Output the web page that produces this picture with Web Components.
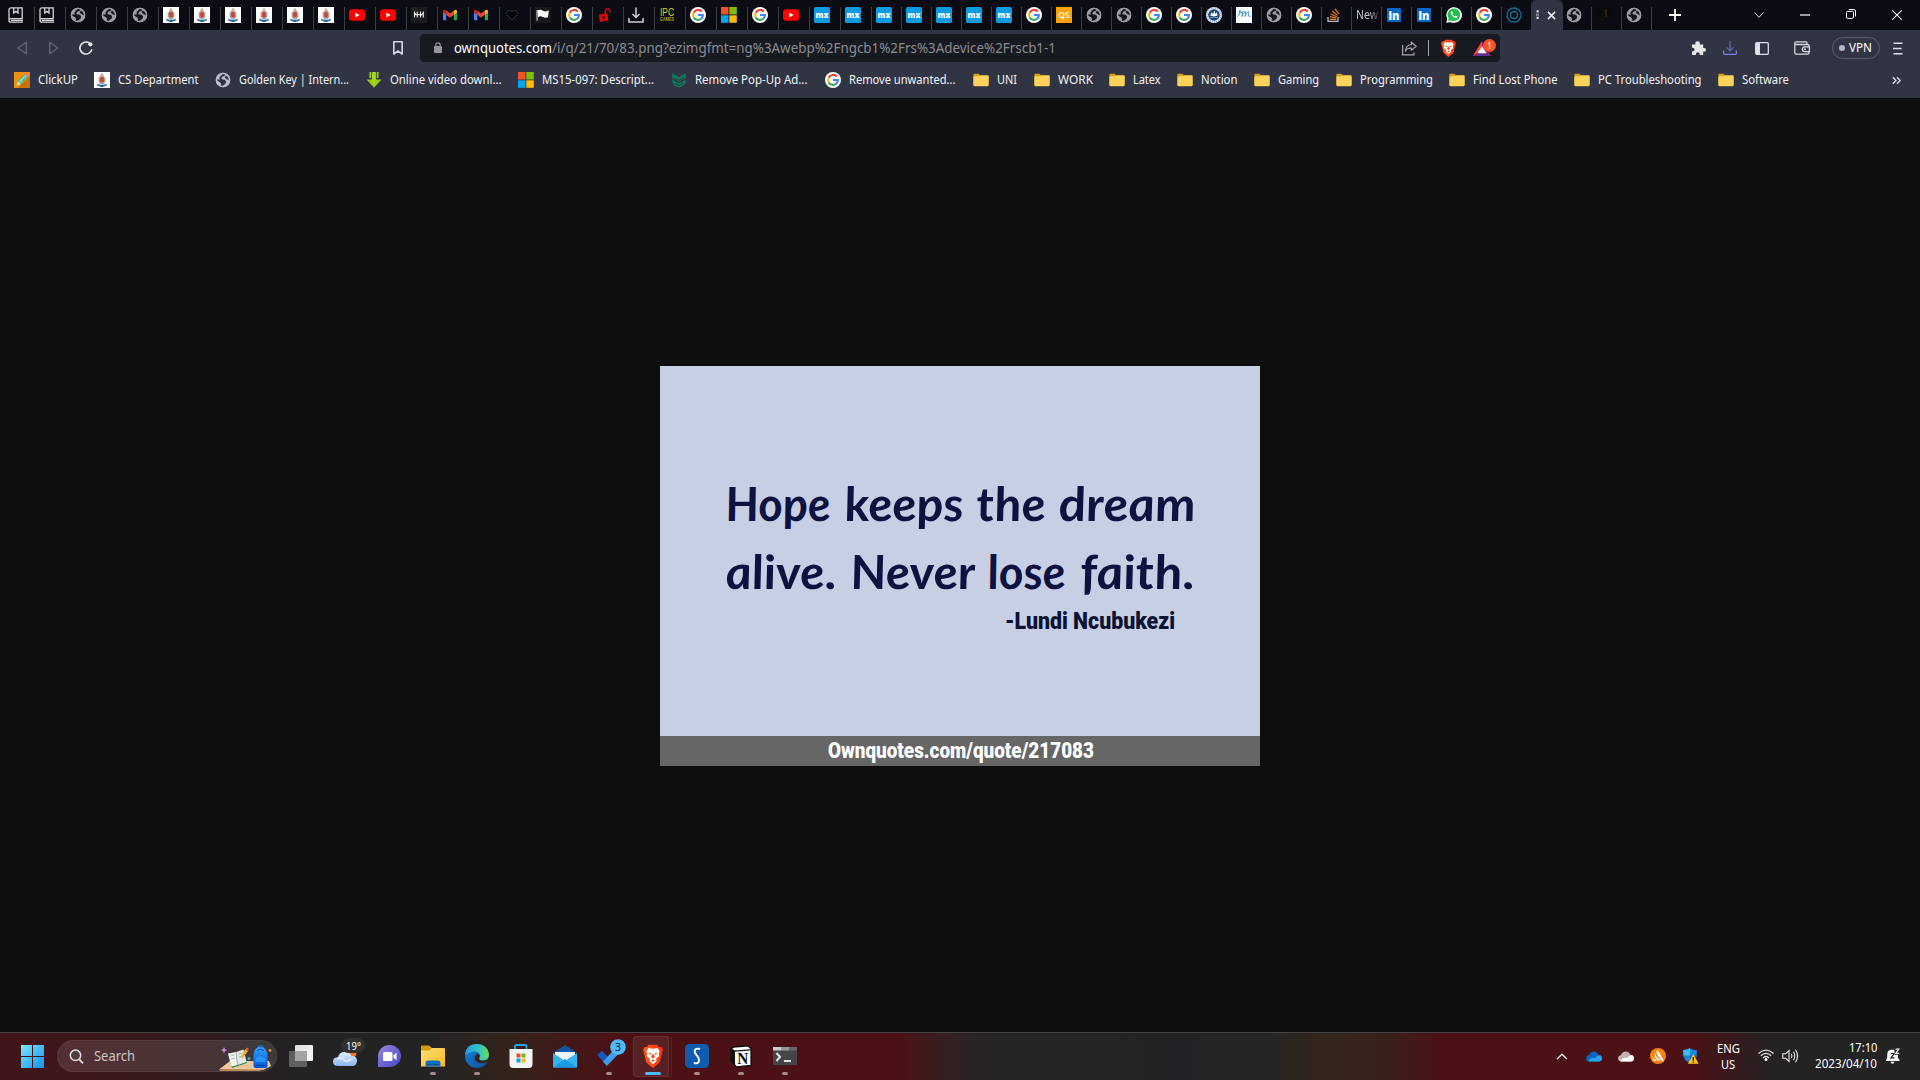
<!DOCTYPE html>
<html lang="en">
<head>
<meta charset="utf-8">
<title>83.png</title>
<style>
html,body{margin:0;padding:0;background:#0e0e0e;overflow:hidden}
body{width:1920px;height:1080px;font-family:"Noto Sans","Open Sans",sans-serif}
</style>
</head>
<body>
<desktop-screen></desktop-screen>
<script>
const ICONS = {
book:['0 0 16 16','<g fill="none" stroke="#d6d6d6" stroke-width="1.3"><path d="M3 .9H14.2V11.6H3Q1 11.6 1 13.4T3 15.2H15M1 13.5V3Q1 .9 3 .9M3 13.4H15M5.7 1V6L7.9 4.4 10 6V1"/></g>'],
globe:['0 0 16 16','<circle cx="8" cy="8" r="7.2" fill="#9a9ea9"/><path d="M8.6 1.3 10.3 2.5 9.6 4 7.5 4.4 6.2 6.2 7.4 7.6 9.8 7.7 11.2 9.5 10.6 11.6 8.2 13.6 6.7 14.3 5.3 14 6.2 12 5 10.2 2.3 8.7 1.9 7.3 4.6 7.7 4.5 5.3 6.3 3.2Z M11 3.4 13.5 5.6 14 8.4 12.3 7.4 10.6 6.6 9.6 5.3Z" fill="#14151d"/><circle cx="8" cy="8" r="6.6" fill="none" stroke="#9a9ea9" stroke-width="1.4"/>'],
globeL:['0 0 16 16','<circle cx="8" cy="8" r="7.2" fill="#bcc0c8"/><path d="M8.6 1.3 10.3 2.5 9.6 4 7.5 4.4 6.2 6.2 7.4 7.6 9.8 7.7 11.2 9.5 10.6 11.6 8.2 13.6 6.7 14.3 5.3 14 6.2 12 5 10.2 2.3 8.7 1.9 7.3 4.6 7.7 4.5 5.3 6.3 3.2Z M11 3.4 13.5 5.6 14 8.4 12.3 7.4 10.6 6.6 9.6 5.3Z" fill="#313443"/><circle cx="8" cy="8" r="6.6" fill="none" stroke="#bcc0c8" stroke-width="1.4"/>'],
crest:['0 0 16 16','<rect width="16" height="16" fill="#fff"/><path d="M8 .8 9.5 3.5H6.5Z" fill="#a9a39a"/><path d="M6 3.4H10V5.2H6Z" fill="#b9a58f"/><rect x="5.2" y="5" width="5.6" height="5.8" rx="1.6" fill="#dc5238"/><path d="M5.2 5V10.5M10.8 5V10.5" stroke="#9fa5b3"/><path d="M8 6V10" stroke="#8f4c44" stroke-width="1.3"/><path d="M3.3 11.5Q5 13 8 12.6 11 13 12.7 11.5V13.6L8 15.2 3.3 13.6Z" fill="#2a6598"/><path d="M5.5 11.4H10.5" stroke="#7fa6bf"/>'],
yt:['0 0 16 16','<rect y="2.2" width="16" height="11.6" rx="3.2" fill="#f00"/><path d="M6.3 5.6V10.4L10.6 8Z" fill="#fff"/>'],
hash:['0 0 16 16','<rect width="16" height="16" fill="#1b1b1e"/><path d="M3.5 4.6V10.6M6.3 4.6V10.6M9.5 4.6V10.6M12.3 4.6V10.6M3.5 5.5 4.8 7.6 6.3 7.6M6.3 7.6H9.5M9.5 8.8 12.3 6" stroke="#eee" stroke-width="1.1" fill="none"/>'],
gmail:['0 0 16 16','<path d="M1 4V12.5Q1 13.2 1.8 13.2H4.2V7.2Z" fill="#4285f4"/><path d="M15 4V12.5Q15 13.2 14.2 13.2H11.8V7.2Z" fill="#34a853"/><path d="M4.2 3.6 8 6.6 11.8 3.6V7.8L8 10.8 4.2 7.8Z" fill="#ea4335"/><path d="M1 4.2Q1.2 2.2 3.2 2.9L4.2 3.7V7.8L1 5.4Z" fill="#c5221f"/><path d="M15 4.2Q14.8 2.2 12.8 2.9L11.8 3.7V7.8L15 5.4Z" fill="#fbbc04"/>'],
heart:['0 0 16 16','<path d="M8 13 2.8 7.4Q1.8 4.6 4 3.7 6.4 2.8 8 5.2 9.6 2.8 12 3.7 14.2 4.6 13.2 7.4Z" fill="#020203" stroke="#444447" stroke-width=".8"/>'],
flag:['0 0 16 16','<rect width="16" height="16" fill="#1a1a1c"/><path d="M2 3V13.6" stroke="#ddd"/><path d="M2.5 3.2Q5.5 2.2 8 3.7T13.8 3.6L13 10.3Q10.5 11.3 8 9.9T3 10.2Z" fill="#fff"/>'],
G:['0 0 16 16','<circle cx="8" cy="8" r="8" fill="#fff"/><g fill="none" stroke-width="2.1"><path d="M11.9 4.7A4.9 4.9 0 0 0 3.7 5.7" stroke="#ea4335"/><path d="M3.7 5.7A4.9 4.9 0 0 0 3.8 10.4" stroke="#fbbc05"/><path d="M3.8 10.4A4.9 4.9 0 0 0 11.2 11.7" stroke="#34a853"/><path d="M8 8H12.9Q12.9 10.3 11.2 11.7" stroke="#4285f4"/></g>'],
unlock:['0 0 16 16','<path d="M2 7.4 10.5 6.2 11.4 13.6 2.8 15Z" fill="#d80b0b"/><path d="M8.3 6.5V4Q8.8 1.6 11 1.9 13.2 2.2 12.8 5.5" fill="none" stroke="#d80b0b" stroke-width="1.5"/><circle cx="6.7" cy="10" r="1.2" fill="#300"/><path d="M6.7 10V12.6" stroke="#300"/>'],
dl:['0 0 16 16','<path d="M8 .5V10M4.5 7 8 10.5 11.5 7M1 11V15H15V11" fill="none" stroke="#d0d0d4" stroke-width="1.5"/>'],
ipc:['0 0 16 16','<text x="1" y="8.9" textLength="14" lengthAdjust="spacingAndGlyphs" font-family="Liberation Sans" font-size="10.5" fill="#d2d51c">IPC</text><text x="1" y="14.4" textLength="14" lengthAdjust="spacingAndGlyphs" font-family="Liberation Sans" font-weight="700" font-size="5" fill="#a5a71c">GAMES</text>'],
ms:['0 0 16 16','<path fill="#f35325" d="M0 0h7.5v7.5H0z"/><path fill="#81bc06" d="M8.3 0h7.5v7.5H8.3z"/><path fill="#05a6f0" d="M0 8.3h7.5v7.5H0z"/><path fill="#ffba08" d="M8.3 8.3h7.5v7.5H8.3z"/>'],
mx:['0 0 16 16','<rect width="16" height="16" rx="1.5" fill="#0c9ae0"/><text x="1.6" y="10.8" textLength="12.8" lengthAdjust="spacingAndGlyphs" font-family="Open Sans" font-weight="800" font-size="9.5" fill="#fff">mx</text>'],
qs:['0 0 16 16','<rect width="16" height="16" fill="#fba305"/><text x="2.2" y="10.8" textLength="11.6" lengthAdjust="spacingAndGlyphs" font-family="Open Sans" font-weight="600" font-size="8" fill="#fff">QS</text>'],
ship:['0 0 16 16','<circle cx="8" cy="8" r="8" fill="#e9f1f7"/><circle cx="8" cy="8" r="7" fill="none" stroke="#3f729b" stroke-width=".8" stroke-dasharray="1 1"/><circle cx="8" cy="8" r="5.8" fill="#174a78"/><path d="M4 8.6Q5 7.6 6 4.8L6.8 7.2 8.8 3.2 9 7 10.6 5.2 11.6 8.6 8 9.4Z" fill="#fff"/><path d="M4 10.8Q8 9.5 12 10.8" fill="none" stroke="#8fb3cd" stroke-width=".7"/>'],
em:['0 0 16 16','<rect width="16" height="16" fill="#fff"/><path d="M1.3 9.7Q4 8 4.3 4.5 4.4 3 3.6 3.5 2.5 5.5 4.6 5.6 6.5 5.4 7 4.2L5.8 9.5Q7.5 4.5 9.5 4.5 10.2 5 8.9 9.4 10.8 4.7 12.6 4.4 13.6 4.7 12.2 8.2 12 10 14.9 9" fill="none" stroke="#3b93c0" stroke-width="1"/>'],
stack:['0 0 16 16','<path d="M2 10V14.4H12V10" fill="none" stroke="#babcbf" stroke-width="1.3"/><path d="M3.7 12.3H10.3M3.8 9.7 10.4 11M4.6 7 10.8 9.8M6.3 4.3 11.6 8.4M9 1.9 12.8 7" stroke="#f48024" stroke-width="1.2"/>'],
inn:['0 0 16 16','<rect x="1" y="1" width="14" height="14" rx="1" fill="#0a66c2"/><text x="2.5" y="12.5" textLength="11" lengthAdjust="spacingAndGlyphs" font-family="Open Sans" font-weight="800" font-size="12" fill="#fff">in</text>'],
wa:['0 0 16 16','<path d="M.3 15.8 1.3 11.8A7.8 7.8 0 1 1 4.4 14.9Z" fill="#fff"/><path d="M2 14.1 2.7 11.4A6.3 6.3 0 1 1 5 13.4Z" fill="#1fc04d"/><path d="M5.1 4.5Q3.9 6.2 6.3 8.9 9 11.5 11 10.7L11.4 9.4 9.6 8.4 8.8 9.4Q7 8.6 6.4 7L7.1 6.2 6.4 4.4Z" fill="#fff"/>'],
ring:['0 0 16 16','<circle cx="8" cy="8" r="7" fill="none" stroke="#0e6f91" stroke-width="1.3"/><circle cx="8" cy="8" r="3.6" fill="none" stroke="#0e7698" stroke-width="1.5"/>'],
mini:['0 0 16 16','<path d="M5.6 3.2V5.6M5.6 9.8V12" stroke="#e8eef8" stroke-width="2"/><path d="M4.9 6.4V9" stroke="#5f9be6" stroke-width="1.6"/><path d="M6.5 6.2V9.4" stroke="#a2714e"/>'],
dark:['0 0 16 16','<rect width="16" height="16" fill="#0b0b0d"/><path d="M3 13V9M5 13V7M7 13V6M12 13V8" stroke="#131311"/><path d="M9.8 2V6Q11 8 9.6 10" fill="none" stroke="#3d3212" stroke-width="1.3"/>'],
x:['0 0 10 10','<path d="M1 1 9 9M9 1 1 9" stroke="#eee" stroke-width="1.7"/>'],
plus:['0 0 12 12','<path d="M6 0V12M0 6H12" stroke="#fff" stroke-width="1.8"/>'],
chev:['0 0 10 6','<path d="M.5 .5 5 5.3 9.5 .5" fill="none" stroke="#ddd" stroke-width="1"/>'],
min:['0 0 10 2','<path d="M0 1H10" stroke="#fff" stroke-width="1.2"/>'],
rest:['0 0 10 10','<rect x=".5" y="2.4" width="7" height="7" rx="1.2" fill="none" stroke="#fff"/><path d="M2.8 .5H7.8Q9.5 .5 9.5 2.2V7.4" fill="none" stroke="#fff"/>'],
close:['0 0 10 10','<path d="M.3 .3 9.7 9.7M9.7 .3 .3 9.7" stroke="#fff" stroke-width="1.1"/>'],
back:['0 0 10 14','<path d="M9.3 1.2V12.8L1 7Z" fill="none" stroke="#646875" stroke-width="1.3" stroke-linejoin="round"/>'],
fwd:['0 0 10 14','<path d="M.7 1.2V12.8L9 7Z" fill="none" stroke="#646875" stroke-width="1.3" stroke-linejoin="round"/>'],
reload:['0 0 14 14','<path d="M10.5 2.2A6 6 0 1 0 12.8 8.4" fill="none" stroke="#e8e8ec" stroke-width="1.6"/><circle cx="11.4" cy="3.3" r="2.1" fill="#e8e8ec"/>'],
mark:['0 0 10 14','<path d="M.8 .8H9.2V13L5 10 .8 13Z" fill="none" stroke="#d5d6dc" stroke-width="1.6" stroke-linejoin="round"/>'],
lock:['0 0 8 11','<rect y="4" width="8" height="7" rx=".8" fill="#96979c"/><path d="M1.8 4.5V3Q1.8 .8 4 .8T6.2 3V4.5" fill="none" stroke="#96979c" stroke-width="1.2"/>'],
share:['0 0 15 15','<path d="M.6 4V13.9H12V11.5" fill="none" stroke="#a8a9ad" stroke-width="1.2"/><path d="M9.3 1.2 14.2 5.3 9.3 9.2V7Q5 6.8 3.4 10.2 3.8 4.2 9.3 3.5Z" fill="none" stroke="#a8a9ad" stroke-width="1.2" stroke-linejoin="round"/>'],
vline:['0 0 1 16','<path d="M.5 0V16" stroke="#a2a3a7"/>'],
brave:['0 0 24 28','<defs><linearGradient id="b" x2="1"><stop stop-color="#ff5a1c"/><stop offset="1" stop-color="#fb3310"/></linearGradient></defs><path d="M7 1H17L19.5 3.5 22 3.4 24 7 23 9.5 20.5 20 19 22.5 12 28 5 22.5 3.5 20 1 9.5 0 7 2 3.4 4.5 3.5Z" fill="url(#b)"/><path d="M12 5.5 17.5 4.8 20 8.5 18.8 11.5 19.5 14 15.4 17.6 16.8 19.5 12 23.5 7.2 19.5 8.6 17.6 4.5 14 5.2 11.5 4 8.5 6.5 4.8Z" fill="#fff"/><path d="M6.2 10 10 11 9.2 12.8ZM17.8 10 14 11 14.8 12.8ZM11 12 9.7 15.2 12 17 14.3 15.2 13 12M12 18 9.5 19 12 20.8 14.5 19Z" fill="#f64a1a"/>'],
bat:['0 0 18 15','<path d="M9 0 0 15H18Z" fill="#9e1f63"/><path d="M9 0 0 15 4.5 12.3 9 5Z" fill="#ff4724"/><path d="M0 15H18L13.5 12.3H4.5Z" fill="#662d91"/><path d="M9 5 4.5 12.3H13.5Z" fill="#fff"/>'],
puz:['0 0 15 14','<path d="M1 3.6H4.4Q3.8 .2 6.6 .2T8.8 3.6H12.2V7Q15 6.4 15 8.8T12.2 10.6V14H8.7Q9 11.2 6.9 11.2T5 14H1V10.4Q3.6 10.6 3.6 8.6T1 6.8Z" fill="#e8e8eb"/>'],
dlb:['0 0 14 14','<path d="M7 0V9.5M3.5 6.3 7 9.8 10.5 6.3" fill="none" stroke="#6668b8" stroke-width="1.2"/><path d="M.6 9.5V12Q.6 13.4 2 13.4H12Q13.4 13.4 13.4 12V9.5" fill="none" stroke="#7c7dee" stroke-width="1.3"/>'],
side:['0 0 14 13','<rect x=".7" y=".7" width="12.6" height="11.6" rx="1" fill="none" stroke="#dfdfe4" stroke-width="1.3"/><path d="M.8 1H5V12H.8Z" fill="#dfdfe4"/>'],
wallet:['0 0 16 14','<path d="M13 3V1.8Q13 .8 12 .8H2.3Q.8.8.8 2.1T2.3 3.5H13.8Q15 3.5 15 4.8V5.6M.8 2V11.8Q.8 13.2 2.2 13.2H13.6Q15 13.2 15 11.8V10.8M15.4 5.8H10.6Q8.4 6 8.4 8.2T10.6 10.6H15.4Z" fill="none" stroke="#d8d8dd" stroke-width="1.3"/><circle cx="11" cy="8.2" r="1" fill="#d8d8dd"/>'],
menu:['0 0 10 13','<path d="M.5 1.2H9.5M0 6.5H8.6M.5 11.8H9.5" stroke="#dddde2" stroke-width="1.5"/>'],
pencil:['0 0 16 16','<rect width="16" height="16" fill="#ef9012"/><path d="M16 3V16H4Z" fill="#c87505"/><path d="M2.5 13.6 3.8 9.6 11.5 2.3 14 4.8 6.4 12.3Z" fill="#42c7ad"/><path d="M5 10.4 12 3.5" stroke="#c8f2df"/><path d="M11.2 2.5 12.5 1.4 14.8 3.8 13.8 5Z" fill="#f076a3"/><path d="M2.5 13.6 3.8 9.6 6.4 12.3Z" fill="#f6e4c0"/>'],
garrow:['0 0 16 16','<path d="M3.4 0H5V6H3.4ZM11 0H12.6V6H11ZM5.7 0H10.3V7.5H15.5L8 15.8 .5 7.5H5.7Z" fill="#94cf13"/><path d="M8 0V14" stroke="#b3e640"/>'],
mal:['0 0 14 14','<path d="M1 1 7 4.3 13 1V5L7 8.5 1 5ZM1 6.5 7 10 13 6.5V9L10.5 12 7 13.5 3.5 12 1 9Z" fill="#0c7a5e"/><path d="M3 5 7 7.2 11 5M3.5 10 7 11.9 10.5 10" fill="none" stroke="#31423f"/>'],
folder:['0 0 16 14','<path d="M.4 1.5Q.4 .7 1.2 .7H5.4L7 2.3H14.6Q15.6 2.3 15.6 3.3V12.2H.4Z" fill="#d9a01b"/><path d="M.4 4Q.4 3.2 1.2 3.2H6L7.3 2.5H14.8Q15.6 2.5 15.6 3.4V12Q15.6 13.2 14.4 13.2H1.6Q.4 13.2 .4 12Z" fill="#fdd35c"/>'],
more:['0 0 9 7','<path d="M.8 .3 4 3.5 .8 6.7M5 .3 8.2 3.5 5 6.7" fill="none" stroke="#e2e2e6" stroke-width="1.3"/>'],
win:['0 0 23 23','<defs><linearGradient id="w" x2="1" y2="1"><stop stop-color="#7ae6fb"/><stop offset="1" stop-color="#1292f4"/></linearGradient></defs><path fill="url(#w)" d="M0 0H11V11H0ZM12 0H23V11H12ZM0 12H11V23H0ZM12 12H23V23H12Z"/>'],
mag:['0 0 15 15','<circle cx="6.5" cy="6.3" r="5.2" fill="#4f3c3f" stroke="#e3dddd" stroke-width="1.5"/><path d="M10.3 10.3 14 14.3" stroke="#e3dddd" stroke-width="1.8"/>'],
art:['0 0 53 27','<defs><linearGradient id="p" x2="0" y2="1"><stop stop-color="#35a0ff"/><stop offset="1" stop-color="#0553d8"/></linearGradient></defs><path d="M0 24.5 11 16H50L52 21 44 25Z" fill="#eec89a"/><path d="M0 24.5 H44 L40 26H1Z" fill="#b98352"/><path d="M9 10 25 5.5 28 18 13 23Z" fill="#288b4a"/><path d="M9 8.5 17 7 18.5 20 12.5 21.5Z" fill="#f6f6f2"/><path d="M17 7 24.5 4.5 27.5 17 18.5 20Z" fill="#e3e7e8"/><path d="M17 7 18.5 20M11.5 11 15.5 10M12 14 16 13M19.5 9 23.5 8M20 12 24.5 11" stroke="#9aa9a6" stroke-width=".8"/><path d="M23 14 22.5 10.5 26.5 4 29 6Z" fill="#f7ac2e"/><path d="M26.5 4 28 2.5 30 4 29 6Z" fill="#e75638"/><path d="M38.5 2.7Q41.5-1.5 44.5 2.7" fill="none" stroke="#1173e6" stroke-width="1.4"/><path d="M34.5 12Q34.5 2 41.5 2T48.5 12V21Q48.5 23 46 23H37Q34.5 23 34.5 21Z" fill="url(#p)"/><path d="M36.5 13Q41.5 10 46.5 13V17H36.5Z" fill="#2694ff"/><path d="M38 5.5Q41.5 3 45 5.5M36.5 20.5H46.5" stroke="#0a3fad" fill="none"/><path d="M5 2 6 4.2 8.3 5 6 6 5 8.4 4 6 1.8 5 4 4.2Z" fill="#d985ee"/><circle cx="30" cy="13.5" r="1.5" fill="#35b7b6"/><circle cx="51" cy="5.5" r="1.4" fill="#e59d0f"/>'],
view:['0 0 24 22','<defs><linearGradient id="v" x2="1" y2="1"><stop stop-color="#ddd"/><stop offset="1" stop-color="#fff"/></linearGradient></defs><rect x="6" width="18" height="16" rx="1" fill="url(#v)"/><rect y="6" width="18" height="16" rx="1" fill="#606060"/><rect x="6" y="6" width="12" height="10" fill="#a4a4a4"/>'],
weather:['0 0 34 30','<circle cx="18.5" cy="15" r="5" fill="#f57819"/><defs><linearGradient id="c" x2="0" y2="1"><stop stop-color="#e0efff"/><stop offset="1" stop-color="#8bb4ef"/></linearGradient></defs><path d="M5 28Q0 28 0 23.5T5 19.5Q6 14 11.5 14T18.5 18Q24 17.5 24 23 23.5 28 19.5 28Z" fill="url(#c)"/><path d="M4 20.5Q8 19 11 22T18 21" fill="none" stroke="#f6fbff" stroke-width="2" opacity=".6"/><rect x="8" y="0" width="24" height="15" rx="7.5" fill="#303030"/><text x="13" y="12" textLength="15" lengthAdjust="spacingAndGlyphs" font-family="Noto Sans" font-size="11" fill="#fff">19°</text>'],
chat:['0 0 23 23','<defs><linearGradient id="h" x2="1" y2="1"><stop stop-color="#9a86dd"/><stop offset="1" stop-color="#4746c8"/></linearGradient></defs><path d="M0 22V11A11.5 11 0 1 1 11.5 22Z" fill="url(#h)"/><rect x="5" y="7" width="9.5" height="9" rx="1.5" fill="#fff"/><path d="M15.5 10.3 18.5 7.8V15.2L15.5 12.8Z" fill="#fff"/>'],
expl:['0 0 24 22','<path d="M0 1.5Q0 .5 1 .5H8L11 3V9H0Z" fill="#d99a07"/><defs><linearGradient id="e" x2="1" y2="1"><stop stop-color="#ffe07a"/><stop offset="1" stop-color="#fcb91f"/></linearGradient></defs><path d="M0 5.5H8.5L11 3H23Q24 3 24 4V21.5H0Z" fill="url(#e)"/><path d="M4.5 18Q4.5 15.5 7 15.5H17Q19.5 15.5 19.5 18V21.5H4.5Z" fill="#0f6fc0"/><path d="M6.5 19.5H17.5" stroke="#0a4c8e"/>'],
edge:['0 0 24 24','<defs><linearGradient id="g1" x2="1"><stop stop-color="#289be0"/><stop offset=".6" stop-color="#33c4c4"/><stop offset="1" stop-color="#6ddc45"/></linearGradient><linearGradient id="g2" x2="1" y2="1"><stop stop-color="#1586d4"/><stop offset="1" stop-color="#0c4e9c"/></linearGradient></defs><circle cx="12" cy="12" r="12" fill="url(#g2)"/><path d="M0 11Q1 0 12 0 22.5 .5 24 10 24 16.5 17.8 16.5 13.5 16.5 14.2 14 16 11.5 13.8 9 9 5 0 11Z" fill="url(#g1)"/><path d="M24.5 12.5Q23.5 16.5 17.8 16.7 13.5 16.5 14.2 14 15 12.6 14.4 11 12.4 9.5 10.4 11.4 8.8 14 11 17 15 20.6 22 18.3L24.5 17Z" fill="#33211a"/><path d="M8.3 12Q6 18 11.5 21.5 16.5 24.5 21.5 19.5 14 22 10.3 17.2 8.7 14.5 10.4 11.4Z" fill="#155fa9"/>'],
store:['0 0 24 24','<path d="M6 5V2.5Q6 1 7.5 1H16Q17.5 1 17.5 2.5V5" fill="none" stroke="#24a6e6" stroke-width="1.8"/><path d="M.5 5H23.5V20Q23.5 24 20 24H4Q.5 24 .5 20Z" fill="#f4f4f5"/><path fill="#f05125" d="M7.5 9.5H11.5V13.5H7.5Z"/><path fill="#7fba12" d="M12.5 9.5H16.5V13.5H12.5Z"/><path fill="#0aa2ec" d="M7.5 14.5H11.5V18.5H7.5Z"/><path fill="#fcb613" d="M12.5 14.5H16.5V18.5H12.5Z"/>'],
mail:['0 0 24 23','<path d="M0 8 12 0 24 8Z" fill="#0d57a5"/><path d="M2 7H22V13L12 18 2 13Z" fill="#eef4fa"/><path d="M0 8 12 16 24 8V22.5H0Z" fill="#35b3ee"/><path d="M0 22.5 12 14 24 22.5Z" fill="#1b9be4"/>'],
todo:['0 0 30 28','<path d="M.3 16 4.8 11.8 10.8 17.8 8.3 25Z" fill="#1c56bd"/><path d="M6 22.5 18.5 9 23 13.3 9.8 27Z" fill="#3f9eee"/><circle cx="21" cy="8" r="7.8" fill="#4ebcfb"/><text x="18" y="12" font-family="Noto Sans" font-size="10.5" fill="#111">3</text>'],
S:['0 0 24 24','<rect width="24" height="24" rx="4.5" fill="#0f5bae"/><path d="M15 5Q10 3.5 9.6 7.5 10 10 12.5 12.3 15 16 13.3 18.5 11.7 20 8.8 19" fill="none" stroke="#fff" stroke-width="1.9"/>'],
notion:['0 0 24 24','<path d="M1 4 4 2 20 .8 23 4V21.5L7 23 1 16.5Z" fill="#fff" stroke="#151010" stroke-width="1.6" stroke-linejoin="round"/><path d="M1 4 5.5 6.5V22L1 16.5Z" fill="#151010"/><path d="M1 4 5.5 6.5 22.5 5" fill="none" stroke="#151010" stroke-width="1.3"/><text x="8" y="19.5" textLength="12" lengthAdjust="spacingAndGlyphs" font-family="Liberation Serif" font-weight="700" font-size="17" fill="#0c0c0c">N</text>'],
term:['0 0 24 18','<path d="M0 1H24V18H0Z" fill="#454545"/><path d="M0 0H8V3.5H0Z" fill="#ccc"/><path d="M8 0H16V3.5H8Z" fill="#999"/><path d="M16 0H24V3.5H16Z" fill="#686868"/><path d="M3.5 6 7 9.8 3.5 14" fill="none" stroke="#e6e6e6" stroke-width="2"/><path d="M11 14H18" stroke="#fff" stroke-width="1.7"/>'],
up:['0 0 12 7','<path d="M1 6 6 1.2 11 6" fill="none" stroke="#f2ecec" stroke-width="1.3"/>'],
od:['0 0 16 11','<path d="M3 10.5Q0 10 0 7 .2 4.5 3 4 4 .5 7.8 .5 11 .5 12.2 3.8 16 4 16 7.3 15.7 10.5 13 10.5Z" fill="#0b62b9"/><path d="M2 10Q5 5.5 9 7 12 3 14.5 4.6 16 5.5 16 7.5 15.7 10.5 13 10.5H3Z" fill="#28a3ea"/>'],
cl:['0 0 16 11','<path d="M3 10.5Q0 10 0 7 .2 4.5 3 4 4 .5 7.8 .5 11 .5 12.2 3.8 16 4 16 7.3 15.7 10.5 13 10.5Z" fill="#c5b1b2"/><path d="M2 10Q5 5.5 9 7 12 3 14.5 4.6 16 5.5 16 7.5 15.7 10.5 13 10.5H3Z" fill="#fff"/>'],
avast:['0 0 16 16','<circle cx="8" cy="8" r="8" fill="#f98410"/><path d="M6.2 3Q8.2 1.9 9.2 4.2L13.6 12.4Q13.2 13.6 12 12.9 7.5 9 6.2 3ZM4.8 5.6Q6.3 9.6 10.3 12.8H8Q4 9.8 4.8 5.6ZM3.4 9Q4.6 11.6 6.8 12.8H4Q2.4 11.2 3.4 9Z" fill="#fff"/>'],
def:['0 0 16 16','<path d="M7 0Q9 2 13.8 2V7Q13.5 12 7 15 .5 12 .3 7V2Q5 2 7 0Z" fill="#1589da"/><path d="M7 0V7.5H.3V2Q5 2 7 0Z" fill="#39bdf3"/><path d="M7 7.5H13.8Q13.3 12 7 15Z" fill="#0c5aaf"/><path d="M10.3 5.8 15.6 15.8H5Z" fill="#fbc516"/><path d="M10.3 9V12.7M10.3 13.6V14.8" stroke="#111" stroke-width="1.3"/>'],
wifi:['0 0 16 12','<g fill="none" stroke="#e5e5e5" stroke-width="1.2"><path d="M.5 4.5Q8-2.3 15.5 4.5M2.8 6.8Q8 2 13.2 6.8M5 9Q8 6 11 9"/></g><circle cx="8" cy="10.4" r="1.5" fill="#fff"/>'],
vol:['0 0 17 14','<g fill="none" stroke="#e8e8e8" stroke-width="1.1"><path d="M.8 4.8H3.6L7 1.5V12.5L3.6 9.2H.8ZM9.3 4.7Q10.8 7 9.3 9.3M11.5 2.8Q14 7 11.5 11.2M13.5 .7Q17.6 7 13.5 13.3"/></g>'],
bell:['0 0 14 16','<path d="M0 11.8 1.2 10V6.5Q1.4 1.8 6 1.6L8.5 2V6.8H12V10L13.5 11.8V13H0ZM4.5 13.7H8.5Q8 15.8 6.5 15.8T4.5 13.7Z" fill="#f4f4f4"/><path d="M5 5.5H8.2L5 9.8H8.4" fill="none" stroke="#222" stroke-width="1.2"/><path d="M9.5 1.2H12.8L9.6 5.3H13.2" fill="none" stroke="#eee" stroke-width="1.2"/>']
};

class UiIcon extends HTMLElement {
  connectedCallback() {
    const [vb, body] = ICONS[this.getAttribute('name')];
    const d = vb.split(' ');
    const w = this.getAttribute('w') || d[2], h = this.getAttribute('h') || d[3];
    this.attachShadow({mode:'open'}).innerHTML =
      `<style>:host{display:block;flex:none;width:${w}px;height:${h}px}svg{display:block;overflow:visible}</style>
       <svg width="${w}" height="${h}" viewBox="${vb}" preserveAspectRatio="none">${body}</svg>`;
  }
}
customElements.define('ui-icon', UiIcon);

/* A single line of text set to an exact advance width, optionally skewed about its baseline. */
class FitText extends HTMLElement {
  connectedCallback() {
    const a = n => this.getAttribute(n);
    const w = a('w'), h = a('h') || 18, b = a('b') || 13, t = this.textContent;
    const skew = a('skew') ? ` transform="translate(0 ${b}) skewX(${a('skew')}) translate(0 -${b})"` : '';
    this.attachShadow({mode:'open'}).innerHTML =
      `<style>:host{display:block;flex:none;width:${w}px;height:${h}px}svg{display:block;overflow:visible}
       text{fill:currentColor;stroke:currentColor;stroke-width:${a('bold') || 0};stroke-linejoin:round}</style>
       <svg width="${w}" height="${h}"><text x="0" y="${b}" font-size="${a('s') || 12}" textLength="${w}" lengthAdjust="spacingAndGlyphs"${skew}></text></svg>`;
    this.shadowRoot.querySelector('text').textContent = t;
  }
}
customElements.define('fit-text', FitText);

/* Horizontal flow: each part is [left, width, markup]; spacing becomes margins. */
const flow = (parts, start = 0) => {
  let end = start;
  return parts.map(([x, w, html, dy = 0]) => {
    const m = x - end; end = x + w;
    return `<span class="cell" style="margin-left:${m}px;width:${w}px;margin-top:${dy}px">${html}</span>`;
  }).join('');
};
const ic = (n, w, h) => `<ui-icon name="${n}"${w ? ` w="${w}" h="${h}"` : ''}></ui-icon>`;
const FLOWCSS = '.cell{display:block;flex:none}';

class TabStrip extends HTMLElement {
  connectedCallback() {
    const names = ('book book globe globe globe crest crest crest crest crest crest yt yt hash gmail gmail heart flag G unlock dl ipc G ms G yt mx mx mx mx mx mx mx G qs globe globe G G ship em globe G stack NEW inn inn wa G ring ACTIVE globe dark globe').split(' ');
    const tabs = names.map((n, i) => {
      const cls = n === 'ACTIVE' ? 'tab active' : 'tab';
      const body = n === 'NEW' ? '<fit-text class="new" w="22" h="16" b="12" s="12">New</fit-text>'
        : n === 'ACTIVE' ? `<span class="crop">${ic('mini')}</span>${ic('x', 9, 9)}` : ic(n);
      return `<div class="${cls}" style="width:${i < 28 ? 31 : 30}px">${body}</div>`;
    }).join('');
    this.attachShadow({mode:'open'}).innerHTML = `<style>
      :host{display:flex;height:30px;background:#0b0b14;padding-left:4px;box-sizing:border-box;overflow:hidden}
      .tab{box-sizing:border-box;flex:none;height:23px;margin-top:7px;padding-left:4px;border-right:1px solid #3c3d42}
      .active{height:30px;margin-top:0;background:#313443;border:0;border-radius:5px 5px 0 0;display:flex;align-items:center;gap:7px;padding-left:0;outline:1px solid #313443}
      .crop{width:8px;overflow:hidden}
      .new{color:#c3c3c8;-webkit-mask:linear-gradient(90deg,#000 60%,#0004 100%)}
      .rest{display:flex;align-items:flex-start}${FLOWCSS}</style>
      ${tabs}<div class="rest">${flow([
        [1669,12,ic('plus'),9],[1754,10,ic('chev'),12],[1800,10,ic('min'),14],[1846,10,ic('rest'),9],[1892,10,ic('close'),9.5]],1652)}</div>`;
  }
}
customElements.define('tab-strip', TabStrip);

class AddressRow extends HTMLElement {
  connectedCallback() {
    this.attachShadow({mode:'open'}).innerHTML = `<style>
      :host{display:flex;height:36px;align-items:center;background:#313443;box-sizing:border-box}
      ${FLOWCSS}
      .box{display:flex;align-items:center;width:1080px;height:28px;background:#181a21;border-radius:4px;flex:none}
      .host{color:#fff}.path{color:#8b8c91}
      .bat{position:relative;height:15px}
      .badge{position:absolute;left:10px;top:-2px;width:13px;height:13px;border-radius:50%;background:#fb542b;color:#fff;font-size:8px;line-height:13px;text-align:center}
      .vpn{box-sizing:border-box;width:48px;height:22px;border:1px solid #5b5e70;border-radius:11px;display:flex;align-items:center;padding-left:6px;gap:4px;color:#fff}
      .dot{width:6px;height:6px;border-radius:50%;background:#b3b5cb}
      </style>${flow([
        [17,10,ic('back')],[49,10,ic('fwd')],[79,14,ic('reload')],[393,10,ic('mark')],
        [420,1080,`<div class="box">${flow([
          [434,8,ic('lock'),-1],
          [454,98,'<fit-text class="host" w="98" h="18" b="14" s="14.3">ownquotes.com</fit-text>'],
          [552,504,'<fit-text class="path" w="504" h="18" b="14" s="14.3">/i/q/21/70/83.png?ezimgfmt=ng%3Awebp%2Fngcb1%2Frs%3Adevice%2Frscb1-1</fit-text>'],
          [1402,15,ic('share')],[1428,1,ic('vline')],[1440.5,15,ic('brave',15,18)],
          [1473,18,`<div class="bat">${ic('bat')}<span class="badge">1</span></div>`]],420)}</div>`],
        [1691,15,ic('puz')],[1723,14,ic('dlb')],[1755,14,ic('side')],[1794,16,ic('wallet')],
        [1832,48,'<div class="vpn"><span class="dot"></span><fit-text w="23" h="16" b="12.2" s="12">VPN</fit-text></div>'],
        [1893,10,ic('menu')]])}`;
  }
}
customElements.define('address-row', AddressRow);

class BookmarkItem extends HTMLElement {
  connectedCallback() {
    this.attachShadow({mode:'open'}).innerHTML = `<style>
      :host{display:flex;align-items:center;color:#f3f3f5}.g{width:${this.getAttribute('gap') || 8}px;flex:none}</style>
      ${ic(this.getAttribute('icon'), 16, this.getAttribute('icon') === 'folder' ? 14 : 16)}<span class="g"></span><fit-text w="${this.getAttribute('w')}">${this.textContent}</fit-text>`;
  }
}
customElements.define('bookmark-item', BookmarkItem);

class BookmarkBar extends HTMLElement {
  connectedCallback() {
    const B = [[14,'pencil',38,40,'ClickUP'],[94,'crest',118.3,80.5,'CS Department'],[215,'globeL',239,110,'Golden Key | Intern...'],[366,'garrow',390,111.5,'Online video downl...'],[518,'ms',542.5,112,'MS15-097: Descript...'],[671,'mal',695.5,112.5,'Remove Pop-Up Ad...'],[825,'G',849.5,106.5,'Remove unwanted...'],[973,'folder',997.3,20,'UNI'],[1034,'folder',1058,35,'WORK'],[1109,'folder',1133.5,27.5,'Latex'],[1177,'folder',1201.5,36.5,'Notion'],[1254,'folder',1278,41,'Gaming'],[1336,'folder',1360,73,'Programming'],[1449,'folder',1473.5,84.5,'Find Lost Phone'],[1574,'folder',1598.3,103.5,'PC Troubleshooting'],[1718,'folder',1742,47,'Software']];
    this.attachShadow({mode:'open'}).innerHTML = `<style>
      :host{display:flex;height:33px;padding-bottom:4px;align-items:center;background:#313443;border-bottom:1px solid #08080e;box-sizing:border-box}${FLOWCSS}</style>
      ${flow(B.map(([x,i,tx,w,t]) => [x, tx - x + w, `<bookmark-item icon="${i}" gap="${tx-x-16}" w="${w}">${t}</bookmark-item>`]).concat([[1892,9,ic('more')]]))}`;
  }
}
customElements.define('bookmark-bar', BookmarkBar);

class QuoteCard extends HTMLElement {
  connectedCallback() {
    const line = words => `<div class="q">${flow(words.map(([x, w, t]) =>
      [x, w, `<fit-text w="${w}" h="68" b="45" s="47" skew="6">${t}</fit-text>`]), 660)}</div>`;
    this.attachShadow({mode:'open'}).innerHTML = `<style>
      :host{display:flex;flex-direction:column;width:600px;height:400px;background:#c7cfe5;color:#0d1240}
      ${FLOWCSS}
      .body{height:370px;box-sizing:border-box;padding-top:110px;display:flex;flex-direction:column}
      .q{display:flex;font-family:Lato,sans-serif;font-style:italic;font-weight:700}
      .a{margin-left:345px;font-family:Roboto,sans-serif;font-weight:900;color:#0c1233}
      .foot{height:30px;background:#666;color:#fff;display:flex;justify-content:center;padding-left:2px;font-family:Roboto,sans-serif;font-weight:900}
      </style>
      <div class="body">
        ${line([[726.5,105,'Hope'],[846,119,'keeps'],[977.5,69,'the'],[1059.5,137,'dream']])}
        ${line([[726.5,111,'alive.'],[851.5,125,'Never'],[989,78,'lose'],[1082,114,'faith.']])}
        <fit-text class="a" w="170" h="30" b="17" s="24.5">-Lundi Ncubukezi</fit-text>
      </div>
      <div class="foot"><fit-text w="266" h="30" b="22" s="22.5">Ownquotes.com/quote/217083</fit-text></div>`;
  }
}
customElements.define('quote-card', QuoteCard);

class TaskItem extends HTMLElement {
  connectedCallback() {
    this.attachShadow({mode:'open'}).innerHTML = `<style>
      :host{display:flex;flex-direction:column;align-items:center;width:44px;height:47px;position:relative;flex:none}
      :host([state=active])::before{content:"";position:absolute;left:2px;top:3px;width:34px;height:39px;border:1px solid #ffffff14;border-radius:4px;background:#ffffff12}
      :host([state=active])::after{content:"";position:absolute;left:36px;top:3px;width:4px;height:39px;border:1px solid #ffffff14;border-left:0;border-radius:0 4px 4px 0}
      .i{height:39px;padding-top:7px;box-sizing:border-box;display:flex;align-items:center;position:relative}
      .m{width:6px;height:3px;border-radius:2px;background:#a48c8e;position:relative}
      :host([state=active]) .m{width:16px;background:#4cbcff}
      :host([state=none]) .m{display:none}</style>
      <div class="i"><slot></slot></div><div class="m"></div>`;
  }
}
customElements.define('task-item', TaskItem);

class TaskBar extends HTMLElement {
  connectedCallback() {
    const item = (s, n, w, h, st = '') => `<task-item state="${s}"><ui-icon name="${n}" w="${w}" h="${h}" style="${st}"></ui-icon></task-item>`;
    this.attachShadow({mode:'open'}).innerHTML = `<style>
      :host{display:flex;height:48px;box-sizing:border-box;border-top:1px solid #484343;color:#fff;
        background:linear-gradient(90deg,#411519 0,#3d171a 80px,#321c1e 200px,#242223 290px,#232324 430px,#33221a 510px,#401a18 560px,#4b1114 620px,#4b1114 900px,#332021 945px,#232425 1000px,#222326 1180px,#242424 1260px,#35261b 1330px,#3a201b 1390px,#4b1114 1440px,#4b1114 1690px,#3c181b 1725px,#262122 1765px,#232323 1800px)}
      ${FLOWCSS}
      .pill{display:flex;align-items:center;box-sizing:border-box;width:220px;height:32px;border-radius:16px;background:#ffffff1c;border:1px solid #ffffff0d;overflow:hidden}
      .lbl{color:#cfc5c6}
      </style>${flow([
        [21,23,ic('win'),12],
        [57,220,`<div class="pill">${flow([[68,15,ic('mag')],[93,42,'<fit-text class="lbl" w="41" h="20" b="15" s="14">Search</fit-text>'],[218,53,ic('art',53,27),4]],57)}</div>`,7],
        [279,44,item('none','view',24,22)],
        [323,44,item('none','weather',34,30,'margin:-6px 0 0 9px')],
        [367,44,item('none','chat',23,23)],
        [411,44,item('run','expl',24,22)],
        [455,44,item('run','edge',24,24)],
        [499,44,item('none','store',24,24)],
        [543,44,item('none','mail',24,23)],
        [587,44,item('run','todo',30,28,'margin:-7px 0 0 5px')],
        [631,44,item('active','brave',20,24)],
        [675,44,item('run','S',24,24)],
        [719,44,item('run','notion',22,23)],
        [763,44,item('run','term',24,18)],
        [1556,12,ic('up'),20],[1586,16,ic('od'),18],[1618,16,ic('cl'),18],[1650,16,ic('avast'),15],[1683,16,ic('def'),15],
        [1716.5,23,'<fit-text w="23" h="16" b="12" s="12">ENG</fit-text><fit-text style="margin-left:4.5px" w="14" h="16" b="12" s="12">US</fit-text>',8],
        [1758,16,ic('wifi'),16],[1782,17,ic('vol'),16],
        [1815,62,'<fit-text style="margin-left:33.5px" w="28.5" h="16" b="12" s="12">17:10</fit-text><fit-text w="62" h="16" b="12" s="12">2023/04/10</fit-text>',7],
        [1885.5,14,ic('bell'),15]])}`;
  }
}
customElements.define('task-bar', TaskBar);

class DesktopScreen extends HTMLElement {
  connectedCallback() {
    this.attachShadow({mode:'open'}).innerHTML = `<style>
      :host{display:flex;flex-direction:column;width:1920px;height:1080px;background:#0e0e0e}
      main{flex:1;display:flex;justify-content:center;align-items:center;padding-top:1px}</style>
      <tab-strip></tab-strip><address-row></address-row><bookmark-bar></bookmark-bar>
      <main><quote-card></quote-card></main><task-bar></task-bar>`;
  }
}
customElements.define('desktop-screen', DesktopScreen);
</script>
</body>
</html>
